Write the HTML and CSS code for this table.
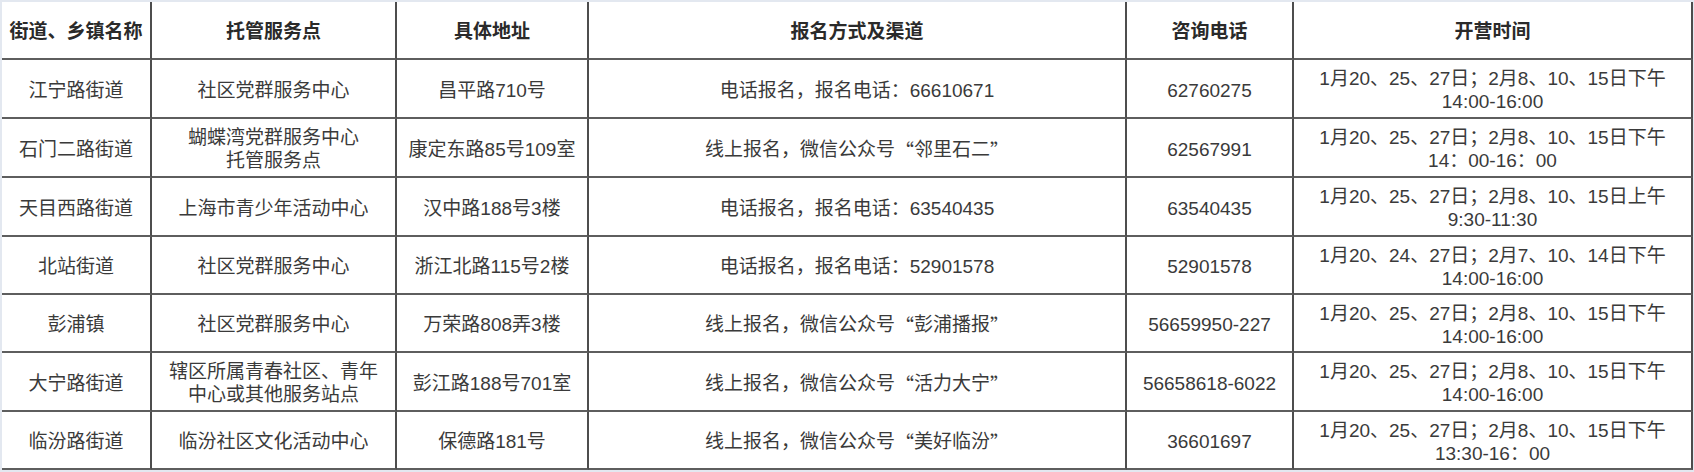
FILE: index.html
```html
<!DOCTYPE html>
<html lang="zh-CN">
<head>
<meta charset="utf-8">
<title>托管服务点</title>
<link rel="stylesheet" href="styles.css">
</head>
<body>
<div class="sheet">
  <div class="grid">
    <div class="cell head">街道、乡镇名称</div>
    <div class="cell head">托管服务点</div>
    <div class="cell head">具体地址</div>
    <div class="cell head">报名方式及渠道</div>
    <div class="cell head">咨询电话</div>
    <div class="cell head">开营时间</div>

    <div class="cell">江宁路街道</div>
    <div class="cell">社区党群服务中心</div>
    <div class="cell">昌平路710号</div>
    <div class="cell">电话报名，报名电话：66610671</div>
    <div class="cell">62760275</div>
    <div class="cell multi"><span class="ln">1月20、25、27日；2月8、10、15日下午</span><span class="ln">14:00-16:00</span></div>

    <div class="cell">石门二路街道</div>
    <div class="cell multi"><span class="ln">蝴蝶湾党群服务中心</span><span class="ln">托管服务点</span></div>
    <div class="cell">康定东路85号109室</div>
    <div class="cell">线上报名，微信公众号<span class="cjk">“</span>邻里石二<span class="cjk">”</span></div>
    <div class="cell">62567991</div>
    <div class="cell multi"><span class="ln">1月20、25、27日；2月8、10、15日下午</span><span class="ln">14：00-16：00</span></div>

    <div class="cell">天目西路街道</div>
    <div class="cell">上海市青少年活动中心</div>
    <div class="cell">汉中路188号3楼</div>
    <div class="cell">电话报名，报名电话：63540435</div>
    <div class="cell">63540435</div>
    <div class="cell multi"><span class="ln">1月20、25、27日；2月8、10、15日上午</span><span class="ln">9:30-11:30</span></div>

    <div class="cell">北站街道</div>
    <div class="cell">社区党群服务中心</div>
    <div class="cell">浙江北路115号2楼</div>
    <div class="cell">电话报名，报名电话：52901578</div>
    <div class="cell">52901578</div>
    <div class="cell multi"><span class="ln">1月20、24、27日；2月7、10、14日下午</span><span class="ln">14:00-16:00</span></div>

    <div class="cell">彭浦镇</div>
    <div class="cell">社区党群服务中心</div>
    <div class="cell">万荣路808弄3楼</div>
    <div class="cell">线上报名，微信公众号<span class="cjk">“</span>彭浦播报<span class="cjk">”</span></div>
    <div class="cell">56659950-227</div>
    <div class="cell multi"><span class="ln">1月20、25、27日；2月8、10、15日下午</span><span class="ln">14:00-16:00</span></div>

    <div class="cell">大宁路街道</div>
    <div class="cell multi"><span class="ln">辖区所属青春社区、青年</span><span class="ln">中心或其他服务站点</span></div>
    <div class="cell">彭江路188号701室</div>
    <div class="cell">线上报名，微信公众号<span class="cjk">“</span>活力大宁<span class="cjk">”</span></div>
    <div class="cell">56658618-6022</div>
    <div class="cell multi"><span class="ln">1月20、25、27日；2月8、10、15日下午</span><span class="ln">14:00-16:00</span></div>

    <div class="cell">临汾路街道</div>
    <div class="cell">临汾社区文化活动中心</div>
    <div class="cell">保德路181号</div>
    <div class="cell">线上报名，微信公众号<span class="cjk">“</span>美好临汾<span class="cjk">”</span></div>
    <div class="cell">36601697</div>
    <div class="cell multi"><span class="ln">1月20、25、27日；2月8、10、15日下午</span><span class="ln">13:30-16：00</span></div>
  </div>
</div>
</body>
</html>
```
FILE: styles.css
```css
html, body {
  margin: 0;
  padding: 0;
}
body {
  background: #e3e8f0;
  width: 1694px;
  height: 472px;
  overflow: hidden;
  font-family: "Liberation Sans", "Noto Sans CJK SC", sans-serif;
}
.sheet {
  padding: 2px 0 0 2px;
}
.grid {
  display: grid;
  grid-template-columns: 150px 245px 192px 538px 167px 399px;
  grid-template-rows: 58px 59px 59px 59px 58px 58px 59px 58px;
  background: #ffffff;
  width: 1691px;
}
.cell {
  box-sizing: border-box;
  border-right: 2px solid #4d4d4d;
  border-bottom: 2px solid #5e5e5e;
  display: flex;
  align-items: center;
  justify-content: center;
  text-align: center;
  white-space: nowrap;
  font-size: 19px;
  line-height: 23px;
  color: #3a3a3a;
  padding-top: 3px;
}
.multi {
  flex-direction: column;
}
.ln {
  display: block;
  height: 23px;
  line-height: 23px;
}
.cjk {
  font-family: "Noto Sans CJK SC", sans-serif;
}
.head {
  font-weight: 700;
  color: #2a2a2a;
}
```
